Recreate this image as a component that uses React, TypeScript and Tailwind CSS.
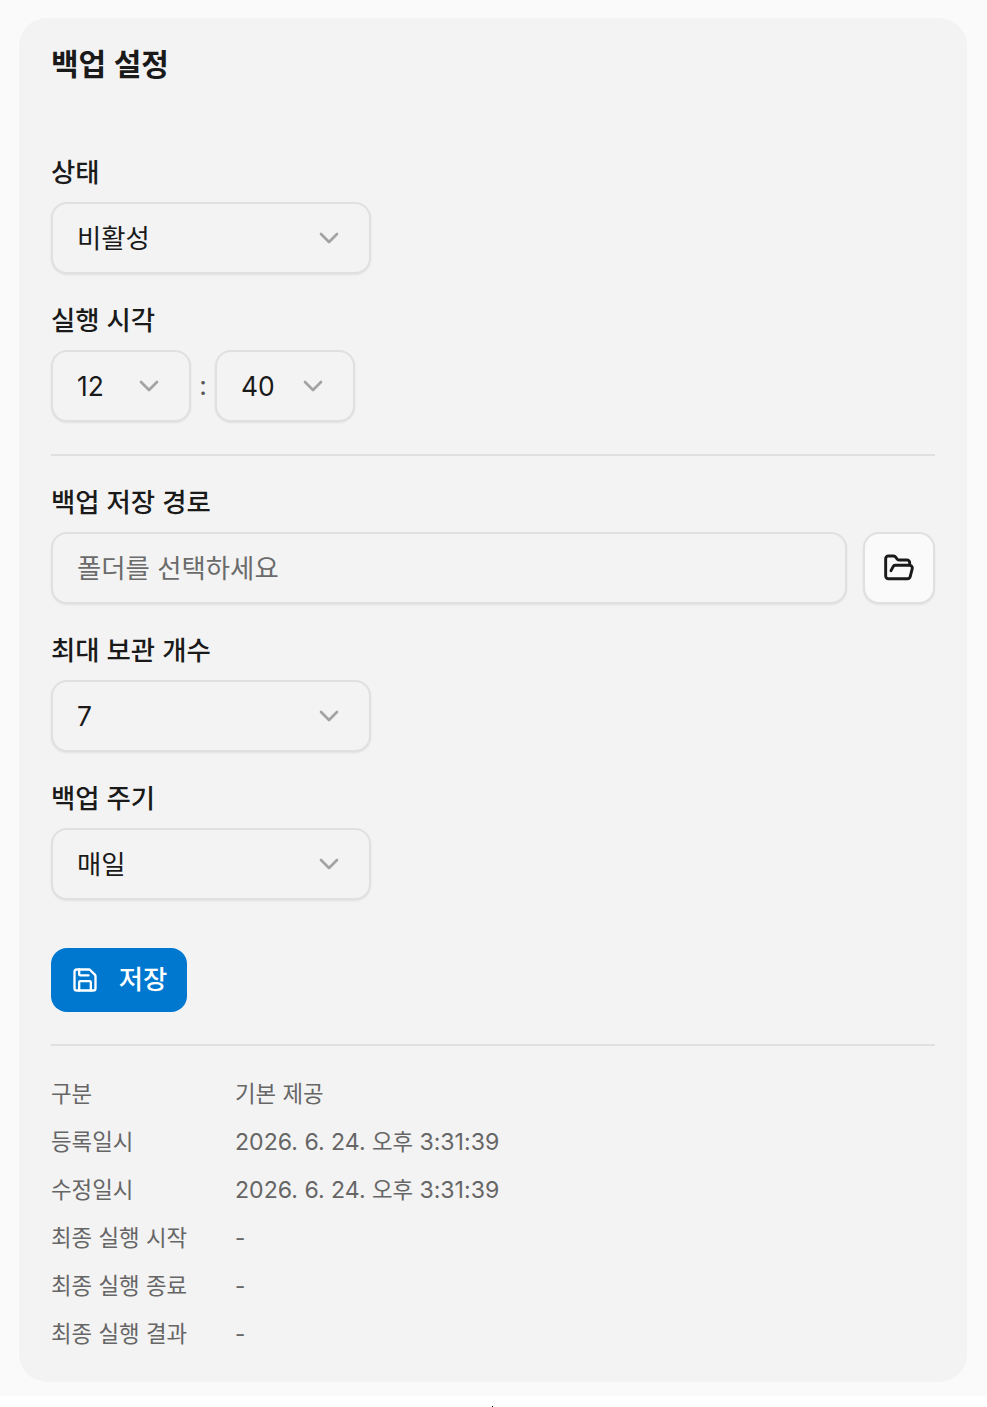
import { ChevronDown, FolderOpen, Save } from "lucide-react";

function Select({ value, width }: { value: string; width: string }) {
  return (
    <div className={`flex h-[72px] items-center justify-between rounded-[16px] border-2 border-[#e0e0e0] bg-[#f3f3f3] pl-[24px] pr-[24px] shadow-[0_1px_2px_rgba(0,0,0,0.08)] ${width}`}>
      <span className="text-[26.4px] leading-[36px] text-[#1a1a1a]">{value}</span>
      <ChevronDown size={32} strokeWidth={2} className="text-[#a3a3a3]" />
    </div>
  );
}

function Label({ children }: { children: string }) {
  return <div className="flex h-[48px] items-center pt-[2px] text-[26.4px] font-medium text-[#1a1a1a]">{children}</div>;
}

function DateText() {
  return (
    <>
      <span className="text-[23.1px]">2026. 6. 24.</span> 오후 <span className="text-[23.1px]">3:31:39</span>
    </>
  );
}

const info = [
  { k: "구분", v: "기본 제공" },
  { k: "등록일시", v: <DateText /> },
  { k: "수정일시", v: <DateText /> },
  { k: "최종 실행 시작", v: "-" },
  { k: "최종 실행 종료", v: "-" },
  { k: "최종 실행 결과", v: "-" },
];

export default function App() {
  return (
    <div className="relative h-[1407px] bg-white font-['Inter','Noto_Sans_CJK_KR',sans-serif]">
      <div className="h-[1396px] bg-[#fafafa] pl-[19px] pr-[20px] pt-[18px]">
        <div className="h-[1364px] rounded-[28px] bg-[#f3f3f3] px-[32px] pt-[24px]">
          <h1 className="h-[44px] text-[30px] font-semibold leading-[44px] text-[#1a1a1a]">백업 설정</h1>
          <div className="mt-[62px]">
            <Label>상태</Label>
            <div className="mt-[6px]"><Select value="비활성" width="w-[320px]" /></div>
          </div>
          <div className="mt-[22px]">
            <Label>실행 시각</Label>
            <div className="mt-[6px] flex items-center">
              <Select value="12" width="w-[140px]" />
              <span className="w-[24px] text-center text-[26.4px] text-[#555555]">:</span>
              <Select value="40" width="w-[140px]" />
            </div>
          </div>
          <div className="mt-[32px] h-[2px] bg-[#e0e0e0]" />
          <div className="mt-[22px]">
            <Label>백업 저장 경로</Label>
            <div className="mt-[6px] flex gap-[16px]">
              <div className="flex h-[72px] flex-1 items-center rounded-[16px] border-2 border-[#e0e0e0] bg-[#f3f3f3] pl-[24px] pt-[2px] text-[26.4px] text-[#6b6b6b] shadow-[0_1px_2px_rgba(0,0,0,0.08)]">
                폴더를 선택하세요
              </div>
              <button className="flex h-[72px] w-[72px] items-center justify-center rounded-[16px] border-2 border-[#e0e0e0] bg-[#fafafa] text-[#1a1a1a] shadow-[0_1px_2px_rgba(0,0,0,0.08)]">
                <FolderOpen size={32} strokeWidth={2.2} />
              </button>
            </div>
          </div>
          <div className="mt-[22px]">
            <Label>최대 보관 개수</Label>
            <div className="mt-[6px]"><Select value="7" width="w-[320px]" /></div>
          </div>
          <div className="mt-[22px]">
            <Label>백업 주기</Label>
            <div className="mt-[6px]"><Select value="매일" width="w-[320px]" /></div>
          </div>
          <button className="mt-[48px] flex h-[64px] w-[136px] items-center justify-center gap-[20px] rounded-[16px] bg-[#0078d0] text-[26.4px] font-medium text-white">
            <Save size={28} strokeWidth={2} />
            저장
          </button>
          <div className="mt-[32px] h-[2px] bg-[#e0e0e0]" />
          <div className="mt-[24px] flex flex-col">
            {info.map(({ k, v }) => (
              <div key={k} className="flex h-[48px] items-center text-[22.4px] text-[#666666]">
                <span className="w-[184px] shrink-0">{k}</span>
                <span>{v}</span>
              </div>
            ))}
          </div>
        </div>
      </div>
      <div className="absolute left-[492px] top-[1406px] h-px w-px bg-black" />
    </div>
  );
}
